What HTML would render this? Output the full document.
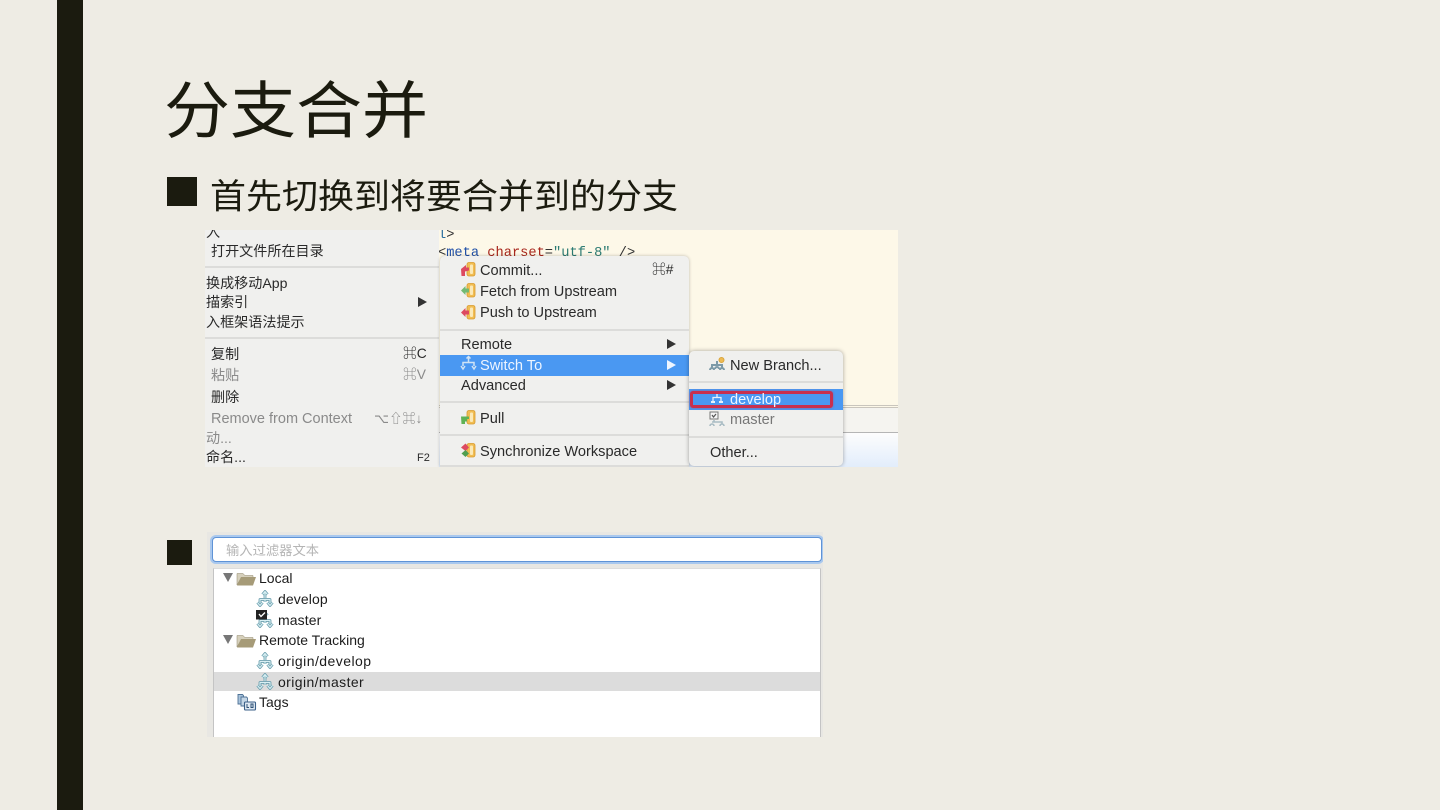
<!DOCTYPE html>
<html lang="zh-CN">
<head>
<meta charset="utf-8">
<style>
*{box-sizing:border-box;margin:0;padding:0}
html,body{width:1440px;height:810px;overflow:hidden;background:#eeece4}
body{position:relative;font-family:"Liberation Sans","Noto Sans CJK SC",sans-serif;color:#1b1b0f}
.a{position:absolute}
.t{position:absolute;white-space:nowrap;font-size:14.6px;line-height:18px;color:#2a2a2a;height:18px}
.c{font-size:14.1px}
.k{font-size:13.8px;font-weight:400}
.g{color:#8a8a8a}
.w{color:#eef5ff}
.sep{position:absolute;height:2px;background:#dcdcda}
.tr{position:absolute;width:0;height:0;border-left:9px solid #333;border-top:5px solid transparent;border-bottom:5px solid transparent}
.x{position:absolute;white-space:nowrap;font-size:14px;line-height:18px;color:#1c1c1c;height:18px}
svg{position:absolute;overflow:visible}
</style>
</head>
<body>
<svg width="0" height="0" style="left:0;top:0">
  <defs>
    <g id="br" fill="none" stroke-linejoin="round">
      <path d="M9 2v6M6.500 4.500L9 1.500l2.500 3M4 13V9.500h10V13M1.500 12.500L4 15.500l2.500-3M11.500 12.500L14 15.500l2.500-3M9 9v3" stroke="#6c9fae" stroke-width="2.800"/>
      <path d="M9 2v6M6.500 4.500L9 1.500l2.500 3M4 13V9.500h10V13M1.500 12.500L4 15.500l2.500-3M11.500 12.500L14 15.500l2.500-3M9 9v3" stroke="#d9f0f4" stroke-width="1.100"/>
    </g>
    <g id="doc">
      <rect x="7" y="0.500" width="8" height="13.500" rx="2" fill="#f1bd52" stroke="#d79a2e" stroke-width=".8"/>
      <rect x="10" y="2.500" width="3" height="9.500" rx="1" fill="#fbe9b8"/>
    </g>
    <g id="fd">
      <path d="M0 1.500h6l2 2h8V6H4L0 13z" fill="#d6d0bc" stroke="#8e8568" stroke-width=".5"/>
      <path d="M4 5h15l-3 8.500H0z" fill="#a69b78"/>
    </g>
  </defs>
</svg>
<div class="a" style="left:57px;top:0;width:26px;height:810px;background:#1b1b0f"></div>
<div class="a" style="left:164px;top:59px;font-size:66px;line-height:94px;white-space:nowrap;font-family:'Noto Sans CJK SC',sans-serif;font-weight:400;transform:scaleY(.94);transform-origin:50% 52%">分支合并</div>
<div class="a" style="left:167px;top:177px;width:30px;height:29px;background:#1b1b0f"></div>
<div class="a" style="left:210px;top:167.500px;font-size:36px;line-height:52px;white-space:nowrap;font-family:'Noto Sans CJK SC',sans-serif;font-weight:400;transform:scaleY(.96);transform-origin:50% 50%">首先切换到将要合并到的分支</div>
<div class="a" style="left:167px;top:540px;width:25px;height:25px;background:#1b1b0f"></div>

<!-- Screenshot 1 -->
<div class="a" style="left:205px;top:230px;width:693px;height:237px;overflow:hidden;background:#f0f0ee;filter:blur(.35px)">
  <!-- editor -->
  <div class="a" style="left:234px;top:0;width:459px;height:237px;background:#fdf8e8"></div>
  <div class="a" style="left:234px;top:175px;width:459px;height:1px;background:#c9c5bd"></div>
  <div class="a" style="left:234px;top:177px;width:459px;height:1px;background:#c9c5bd"></div>
  <div class="a" style="left:234px;top:178px;width:459px;height:25px;background:#f5f4f0;border-bottom:1px solid #b5b5b5"></div>
  <div class="a" style="left:234px;top:203px;width:459px;height:34px;background:linear-gradient(#fdfdfd,#e2edfb)"></div>
  <div class="a" style="left:233px;top:-3px;font:13.700px/18px 'Liberation Mono',monospace;color:#333"><span style="color:#2a6f9e">l</span>&gt;</div>
  <div class="a" style="left:233px;top:15px;font:13.700px/18px 'Liberation Mono',monospace;white-space:nowrap;color:#333">&lt;<span style="color:#1f4fa8">meta</span> <span style="color:#a8261c">charset</span>=<span style="color:#2a7a72">"utf-8"</span> /&gt;</div>

  <!-- left menu -->
  <div class="a" style="left:0;top:0;width:234px;height:237px;background:#f0f0ee"></div>
  <div class="t c" style="left:1px;top:-7px">入</div>
  <div class="t c" style="left:6px;top:12px">打开文件所在目录</div>
  <div class="sep" style="left:0;top:36px;width:234px"></div>
  <div class="t c" style="left:1px;top:44px">换成移动App</div>
  <div class="t c" style="left:1px;top:63px">描索引</div>
  <div class="tr" style="left:213px;top:67px"></div>
  <div class="t c" style="left:1px;top:83px">入框架语法提示</div>
  <div class="sep" style="left:0;top:107px;width:234px"></div>
  <div class="t c" style="left:6px;top:115px">复制</div>
  <div class="t k" style="left:198px;top:115px">⌘C</div>
  <div class="t c g" style="left:6px;top:136px">粘贴</div>
  <div class="t k g" style="left:198px;top:136px">⌘V</div>
  <div class="t c" style="left:6px;top:158px">删除</div>
  <div class="t g" style="left:6px;top:180px;font-size:14.500px">Remove from Context</div>
  <div class="t g" style="left:169px;top:180px;font-size:13.200px">⌥⇧⌘↓</div>
  <div class="t c g" style="left:1px;top:199px">动...</div>
  <div class="t c" style="left:1px;top:218px">命名...</div>
  <div class="t" style="left:212px;top:219px;font-size:11px">F2</div>

  <!-- middle menu -->
  <div class="a" style="left:235px;top:26px;width:249px;height:211px;background:#f0f0ee;border-radius:5px 5px 0 0;box-shadow:0 0 3px rgba(0,0,0,.25)"></div>
  <svg style="left:255px;top:32px" width="16" height="16" viewBox="0 0 16 16"><use href="#doc"/><path d="M1 7l5-4v2.500h3v3l-4 1V14H1.500z" fill="#dd4a60"/></svg>
  <div class="t" style="left:275px;top:32px">Commit...</div>
  <div class="t k" style="left:447px;top:31px">⌘#</div>
  <svg style="left:255px;top:53px" width="16" height="16" viewBox="0 0 16 16"><use href="#doc"/><path d="M1 7.500L5.500 3v2.500H9v4H5.500V12z" fill="#72ba72"/></svg>
  <div class="t" style="left:275px;top:53px">Fetch from Upstream</div>
  <svg style="left:255px;top:75px" width="16" height="16" viewBox="0 0 16 16"><use href="#doc"/><path d="M1 7.500L5.500 3v2.500H9v4H5.500V12z" fill="#dd4a60"/></svg>
  <div class="t" style="left:275px;top:74px">Push to Upstream</div>
  <div class="sep" style="left:235px;top:99px;width:249px"></div>
  <div class="t" style="left:256px;top:106px">Remote</div>
  <div class="tr" style="left:462px;top:109px"></div>
  <div class="a" style="left:235px;top:125px;width:249px;height:21px;background:#4a98f2"></div>
  <svg style="left:255px;top:126px" width="17" height="15" viewBox="0 0 17 15" fill="none" stroke="#cfe3f5" stroke-width="1.500"><path d="M8.500 0v6M6.500 2.500l2-2 2 2M3 10V6.500h11V10M1 10l2 3 2-3M12 10l2 3 2-3"/></svg>
  <div class="t w" style="left:275px;top:127px">Switch To</div>
  <div class="tr" style="left:462px;top:130px;border-left-color:#eef5ff"></div>
  <div class="t" style="left:256px;top:147px">Advanced</div>
  <div class="tr" style="left:462px;top:150px"></div>
  <div class="sep" style="left:235px;top:171px;width:249px"></div>
  <svg style="left:255px;top:180px" width="16" height="16" viewBox="0 0 16 16"><use href="#doc"/><path d="M1 6.500h8v2.500H7v2.500H5V14H1.500z" fill="#5fb255"/></svg>
  <div class="t" style="left:275px;top:180px">Pull</div>
  <div class="sep" style="left:235px;top:204px;width:249px"></div>
  <svg style="left:255px;top:213px" width="16" height="16" viewBox="0 0 16 16"><use href="#doc"/><path d="M1 4.500L5.500 0.500 9 4.500 5.500 8z" fill="#dd4a60"/><path d="M1.500 10.500L5.500 7 9 10.500 5.500 14z" fill="#4f9e4f"/></svg>
  <div class="t" style="left:275px;top:213px">Synchronize Workspace</div>
  <div class="sep" style="left:235px;top:235px;width:249px"></div>

  <!-- submenu -->
  <div class="a" style="left:484px;top:121px;width:154px;height:115px;background:#f0f0ee;border-radius:5px;box-shadow:0 0 4px rgba(0,0,0,.35)"></div>
  <svg style="left:504px;top:127px" width="17" height="15" viewBox="0 0 17 15" fill="none" stroke="#7d9aa8" stroke-width="2"><path d="M8 4v4M3 11V8h10v3M1 13a2 2 0 0 1 4 0M6 12a2 2 0 0 1 4 0M11 13a2 2 0 0 1 4 0"/><circle cx="12.500" cy="3" r="2.500" fill="#eebb55" stroke="#d9a53c" stroke-width="1"/></svg>
  <div class="t" style="left:525px;top:127px">New Branch...</div>
  <div class="sep" style="left:484px;top:151px;width:154px"></div>
  <div class="a" style="left:484px;top:159px;width:154px;height:21px;background:#4a98f2"></div>
  <div class="a" style="left:485px;top:161px;width:143px;height:17px;border:3px solid #c8304f;border-radius:3px;box-shadow:0 0 2px rgba(200,48,79,.6)"></div>
  <svg style="left:505px;top:163px" width="14" height="11" viewBox="0 0 14 11" fill="none" stroke="#e8f1fa" stroke-width="1.300"><path d="M7 1v3M3 8V4.500h8V8"/><path d="M1 9h4M9 9h4" stroke-width="2"/></svg>
  <div class="t w" style="left:525px;top:161px">develop</div>
  <svg style="left:504px;top:181px" width="17" height="16" viewBox="0 0 17 16" fill="none"><rect x="1" y="1" width="8" height="7" fill="#f5f5f5" stroke="#777"/><path d="M3 4l1.500 2L7 3" stroke="#555" stroke-width="1.200"/><path d="M3 11h10v2M5 9v2M1 15a2 2 0 0 1 4 0M11 15a2 2 0 0 1 4 0" stroke="#a9bcc4" stroke-width="1.600"/></svg>
  <div class="t g" style="left:525px;top:181px;color:#777">master</div>
  <div class="sep" style="left:484px;top:206px;width:154px"></div>
  <div class="t" style="left:505px;top:214px">Other...</div>
</div>

<!-- Screenshot 2 -->
<div class="a" style="left:207px;top:532px;width:616px;height:205px;overflow:hidden;background:#e8e7e3;filter:blur(.3px)">
  <div class="a" style="left:5px;top:5px;width:610px;height:25px;background:#fff;border:1px solid #5f93d6;border-radius:4px;box-shadow:0 0 0 2px #a9c8ee"></div>
  <div class="a" style="left:19px;top:10px;font-size:13.300px;line-height:17px;color:#b5b5b5;white-space:nowrap">输入过滤器文本</div>
  <div class="a" style="left:6px;top:36px;width:608px;height:169px;background:#fff;border:1px solid #c4c4c4;border-bottom:0;border-top-color:#ddd"></div>
  <div class="a" style="left:7px;top:140px;width:606px;height:19px;background:#dcdcdc"></div>

  <div class="a" style="left:16px;top:41px;width:0;height:0;border-top:9px solid #777;border-left:5px solid transparent;border-right:5px solid transparent"></div>
  <svg style="left:30px;top:40px" width="19" height="14" viewBox="0 0 19 14"><use href="#fd"/></svg>
  <div class="x" style="left:52px;top:37px">Local</div>

  <svg style="left:49px;top:58px" width="18" height="18" viewBox="0 0 18 18"><use href="#br"/></svg>
  <div class="x" style="left:71px;top:58px;letter-spacing:.1px">develop</div>

  <svg style="left:49px;top:79px" width="18" height="18" viewBox="0 0 18 18"><use href="#br"/><rect x="0" y="-1" width="11" height="9.500" fill="#222"/><path d="M3 3l2 2.500 4-4" stroke="#fff" stroke-width="1.400" fill="none"/></svg>
  <div class="x" style="left:71px;top:79px;letter-spacing:.1px">master</div>

  <div class="a" style="left:16px;top:103px;width:0;height:0;border-top:9px solid #777;border-left:5px solid transparent;border-right:5px solid transparent"></div>
  <svg style="left:30px;top:102px" width="19" height="14" viewBox="0 0 19 14"><use href="#fd"/></svg>
  <div class="x" style="left:52px;top:99px">Remote Tracking</div>

  <svg style="left:49px;top:120px" width="18" height="18" viewBox="0 0 18 18"><use href="#br"/></svg>
  <div class="x" style="left:71px;top:120px;letter-spacing:.45px">origin/develop</div>

  <svg style="left:49px;top:141px" width="18" height="18" viewBox="0 0 18 18"><use href="#br"/></svg>
  <div class="x" style="left:71px;top:141px;letter-spacing:.4px">origin/master</div>

  <svg style="left:30px;top:161px" width="19" height="18" viewBox="0 0 19 18"><path d="M1 1.500h4.500l1 1V11H1z" fill="#a9c4dc" stroke="#4f7296" stroke-width=".9"/><path d="M4 4h5.500l1 1v8H4z" fill="#c4d6e6" stroke="#4f7296" stroke-width=".9"/><rect x="7.500" y="9" width="11" height="8" rx="1" fill="#dfe9f3" stroke="#3c6088" stroke-width="1.100"/><path d="M10 11v3.500h2M14 11h2v3.500h-2z" stroke="#2f5175" fill="none" stroke-width="1"/></svg>
  <div class="x" style="left:52px;top:161px">Tags</div>
</div>
</body>
</html>
